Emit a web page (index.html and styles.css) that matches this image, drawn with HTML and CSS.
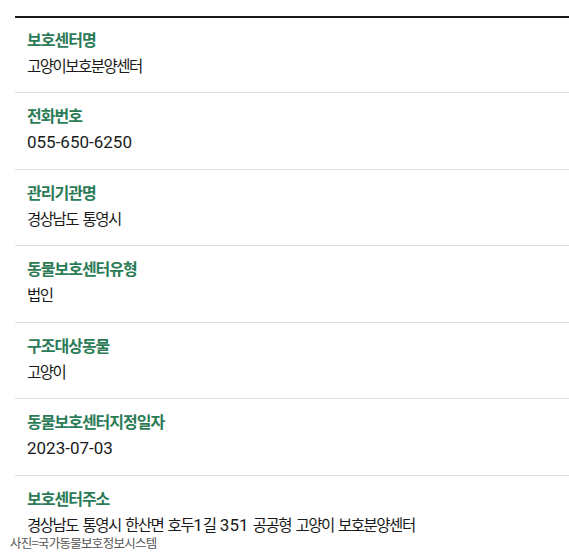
FILE: index.html
```html
<!DOCTYPE html>
<html lang="ko">
<head>
<meta charset="utf-8">
<link rel="stylesheet" href="styles.css">
</head>
<body>
<div class="page">
  <dl class="info">
    <div class="row">
      <dt class="label">보호센터명</dt>
      <dd class="value">고양이보호분양센터</dd>
    </div>
    <div class="row">
      <dt class="label">전화번호</dt>
      <dd class="value"><span class="num">055-650-6250</span></dd>
    </div>
    <div class="row">
      <dt class="label">관리기관명</dt>
      <dd class="value">경상남도 통영시</dd>
    </div>
    <div class="row">
      <dt class="label">동물보호센터유형</dt>
      <dd class="value">법인</dd>
    </div>
    <div class="row">
      <dt class="label">구조대상동물</dt>
      <dd class="value">고양이</dd>
    </div>
    <div class="row">
      <dt class="label">동물보호센터지정일자</dt>
      <dd class="value"><span class="num">2023-07-03</span></dd>
    </div>
    <div class="row">
      <dt class="label">보호센터주소</dt>
      <dd class="value">경상남도 통영시 한산면 호두<span class="num">1</span>길 <span class="num">351</span> 공공형 고양이 보호분양센터</dd>
    </div>
  </dl>
  <p class="credit">사진=국가동물보호정보시스템</p>
</div>
</body>
</html>
```

FILE: styles.css
```css
html, body {
  margin: 0;
  padding: 0;
  background: #ffffff;
}

.page {
  position: relative;
  width: 569px;
  height: 552px;
  overflow: hidden;
  padding-top: 16px;
  box-sizing: border-box;
  font-family: "Noto Sans CJK KR", Roboto, sans-serif;
}

.info {
  margin: 0 0 0 15px;
  border-top: 2px solid #1a1a1a;
}

.row {
  display: flex;
  flex-direction: column;
  gap: 4px;
  padding: 11px 0 16.6px 12px;
  border-bottom: 1px solid #dedede;
}

.row:first-child {
  padding-top: 10px;
  padding-bottom: 16px;
}

.label {
  margin: 0;
  font-size: 16px;
  line-height: 22px;
  font-weight: 700;
  letter-spacing: -1px;
  color: #2c7b57;
}

.value {
  margin: 0;
  font-size: 15.5px;
  line-height: 22px;
  letter-spacing: -1.5px;
  word-spacing: 1.5px;
  color: #1a1a1a;
}

.num {
  font-family: Roboto, sans-serif;
  font-size: 17px;
  line-height: 20px;
  letter-spacing: 0;
  word-spacing: 0;
}

.credit {
  position: absolute;
  left: 10px;
  bottom: 2px;
  margin: 0;
  font-size: 12.5px;
  line-height: 14px;
  letter-spacing: -0.7px;
  color: #555555;
  text-shadow: 0 0 2px #ffffff;
}
```
